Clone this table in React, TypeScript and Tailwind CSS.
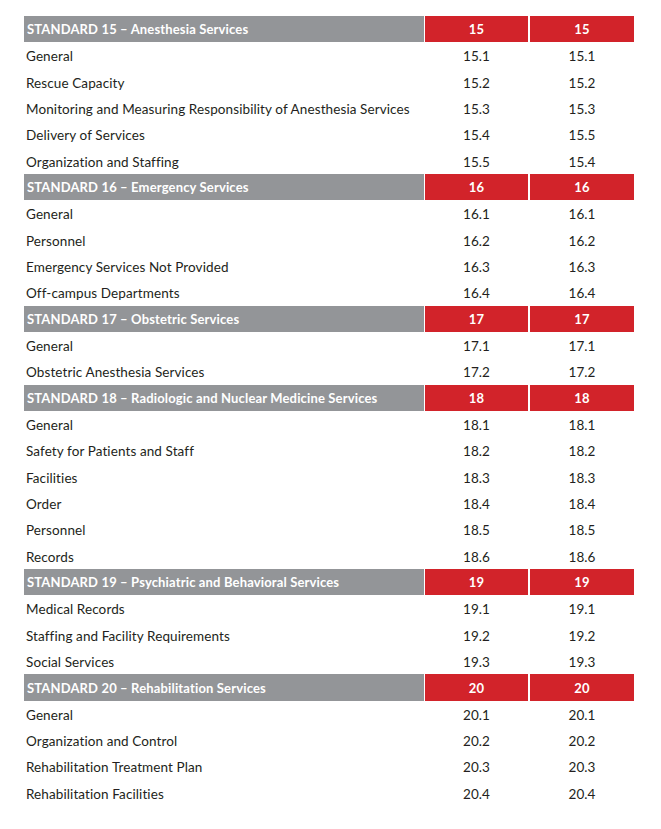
import React from "react";

type Section = { title: string; num: string; rows: [string, string, string][] };

const sections: Section[] = [
  {
    title: "STANDARD 15 – Anesthesia Services",
    num: "15",
    rows: [
      ["General", "15.1", "15.1"],
      ["Rescue Capacity", "15.2", "15.2"],
      ["Monitoring and Measuring Responsibility of Anesthesia Services", "15.3", "15.3"],
      ["Delivery of Services", "15.4", "15.5"],
      ["Organization and Staffing", "15.5", "15.4"],
    ],
  },
  {
    title: "STANDARD 16 – Emergency Services",
    num: "16",
    rows: [
      ["General", "16.1", "16.1"],
      ["Personnel", "16.2", "16.2"],
      ["Emergency Services Not Provided", "16.3", "16.3"],
      ["Off-campus Departments", "16.4", "16.4"],
    ],
  },
  {
    title: "STANDARD 17 – Obstetric Services",
    num: "17",
    rows: [
      ["General", "17.1", "17.1"],
      ["Obstetric Anesthesia Services", "17.2", "17.2"],
    ],
  },
  {
    title: "STANDARD 18 – Radiologic and Nuclear Medicine Services",
    num: "18",
    rows: [
      ["General", "18.1", "18.1"],
      ["Safety for Patients and Staff", "18.2", "18.2"],
      ["Facilities", "18.3", "18.3"],
      ["Order", "18.4", "18.4"],
      ["Personnel", "18.5", "18.5"],
      ["Records", "18.6", "18.6"],
    ],
  },
  {
    title: "STANDARD 19 – Psychiatric and Behavioral Services",
    num: "19",
    rows: [
      ["Medical Records", "19.1", "19.1"],
      ["Staffing and Facility Requirements", "19.2", "19.2"],
      ["Social Services", "19.3", "19.3"],
    ],
  },
  {
    title: "STANDARD 20 – Rehabilitation Services",
    num: "20",
    rows: [
      ["General", "20.1", "20.1"],
      ["Organization and Control", "20.2", "20.2"],
      ["Rehabilitation Treatment Plan", "20.3", "20.3"],
      ["Rehabilitation Facilities", "20.4", "20.4"],
    ],
  },
];

export default function App() {
  return (
    <div
      className="w-[661px] h-[829px] bg-white pt-[16px] pl-[24px] text-[#231f20]"
      style={{ fontFamily: "Lato, 'Open Sans', sans-serif" }}
    >
      {sections.map((s) => (
        <div key={s.num} className="flex flex-col">
          <div className="flex h-[26.33px] items-center text-[13px] tracking-[0.15px] text-white font-bold">
            <div className="w-[400px] h-full bg-[#939598] pl-[3px] pt-[2px] flex items-center">
              {s.title}
            </div>
            <div className="ml-[1px] w-[103px] h-full bg-[#d2232a] pt-[2px] flex items-center justify-center">
              {s.num}
            </div>
            <div className="ml-[2px] w-[104px] h-full bg-[#d2232a] pt-[2px] flex items-center justify-center">
              {s.num}
            </div>
          </div>
          {s.rows.map((r, i) => (
            <div key={i} className="flex h-[26.33px] items-center pt-[2px] text-[13.5px] tracking-[0.1px]">
              <div className="w-[400px] pl-[2px]">{r[0]}</div>
              <div className="ml-[1px] w-[103px] text-center">{r[1]}</div>
              <div className="ml-[2px] w-[104px] text-center">{r[2]}</div>
            </div>
          ))}
        </div>
      ))}
    </div>
  );
}
